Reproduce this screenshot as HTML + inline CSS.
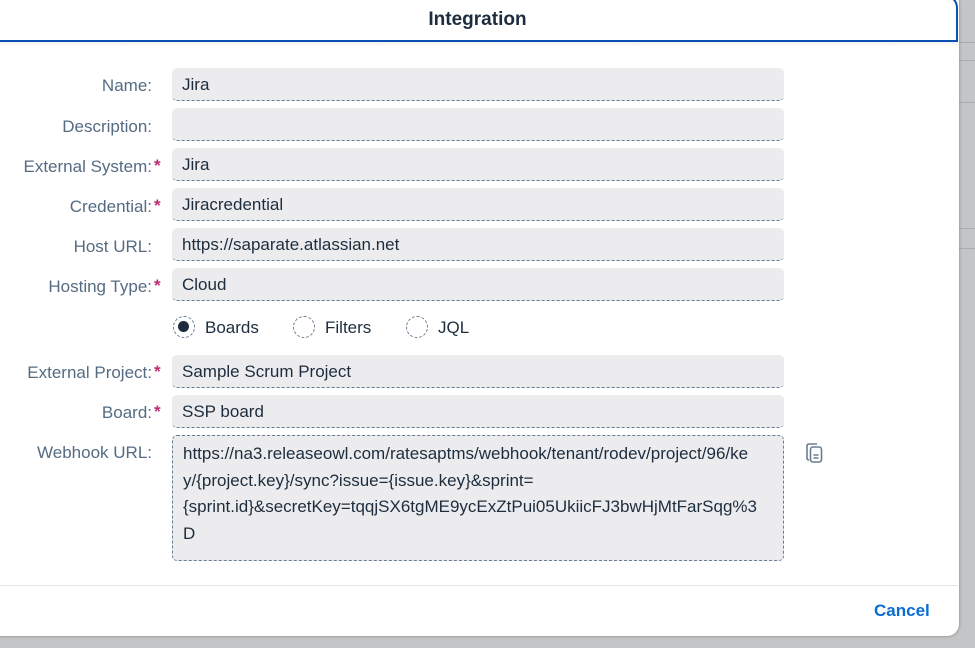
<!DOCTYPE html>
<html><head><meta charset="utf-8"><style>
*{box-sizing:border-box;margin:0;padding:0}
body{width:975px;height:648px;background:#c4c5c7;position:relative;overflow:hidden;font-family:"Liberation Sans",Arial,sans-serif}
.bgl{position:absolute;left:958px;width:17px;height:1px;background:#a9abae}
.dlg{position:absolute;left:-10px;top:-10px;width:969px;height:646px;background:#fff;border-radius:12px;box-shadow:0 0 3px rgba(0,0,0,.35)}
.hdr{position:absolute;left:-6px;top:-6px;width:964px;height:48px;border:2px solid #0a4fb3;border-top-right-radius:14px;background:#fff}
.title{position:absolute;left:0;width:955px;top:9px;text-align:center;font-weight:bold;font-size:19px;color:#1d2d3e}
.lbl{position:absolute;right:823px;font-size:17px;color:#556b82;white-space:nowrap}
.req{position:absolute;left:154px;font-size:17px;color:#c0296f;font-weight:bold}
.inp{position:absolute;left:172px;width:612px;height:33px;background:#ececee;border-radius:5px;border-bottom:1px dashed #6a7d92;font-size:17px;color:#1d2d3e;padding:7px 10px}
.ta{position:absolute;left:172px;top:435px;width:612px;height:126px;background:#ececee;border-radius:5px;border:1px dashed #6a7d92;font-size:17px;color:#1d2d3e;padding:5px 10px;line-height:26.5px;white-space:nowrap}
.rad{position:absolute;top:316px;width:22px;height:22px;border:1.5px dashed #6a7d92;border-radius:50%}
.rl{position:absolute;top:318px;font-size:17px;color:#1d2d3e}
</style></head><body>
<div class="bgl" style="top:42px"></div><div class="bgl" style="top:60px"></div><div class="bgl" style="top:102px"></div><div class="bgl" style="top:228px"></div><div class="bgl" style="top:248px"></div>
<div class="dlg"></div>
<div class="hdr"></div>
<div class="title">Integration</div>
<div style="position:absolute;left:0;top:42px;width:958px;height:4px;background:linear-gradient(#eef0f2,#fff)"></div>

<div class="lbl" style="top:76px">Name:</div>
<div class="inp" style="top:68px">Jira</div>
<div class="lbl" style="top:117px">Description:</div>
<div class="inp" style="top:108px"></div>
<div class="lbl" style="top:157px">External System:</div><div class="req" style="top:156px">*</div>
<div class="inp" style="top:148px">Jira</div>
<div class="lbl" style="top:197px">Credential:</div><div class="req" style="top:196px">*</div>
<div class="inp" style="top:188px">Jiracredential</div>
<div class="lbl" style="top:237px">Host URL:</div>
<div class="inp" style="top:228px">https://saparate.atlassian.net</div>
<div class="lbl" style="top:277px">Hosting Type:</div><div class="req" style="top:276px">*</div>
<div class="inp" style="top:268px">Cloud</div>

<div class="rad" style="left:173px"><div style="position:absolute;left:4px;top:4px;width:11px;height:11px;border-radius:50%;background:#1d2d3e"></div></div>
<div class="rl" style="left:205px">Boards</div>
<div class="rad" style="left:293px"></div><div class="rl" style="left:325px">Filters</div>
<div class="rad" style="left:406px"></div><div class="rl" style="left:438px">JQL</div>

<div class="lbl" style="top:363px">External Project:</div><div class="req" style="top:362px">*</div>
<div class="inp" style="top:355px">Sample Scrum Project</div>
<div class="lbl" style="top:403px">Board:</div><div class="req" style="top:402px">*</div>
<div class="inp" style="top:395px">SSP board</div>
<div class="lbl" style="top:443px">Webhook URL:</div>
<div class="ta">https://na3.releaseowl.com/ratesaptms/webhook/tenant/rodev/project/96/ke<br>y/{project.key}/sync?issue={issue.key}&amp;sprint=<br>{sprint.id}&amp;secretKey=tqqjSX6tgME9ycExZtPui05UkiicFJ3bwHjMtFarSqg%3<br>D</div>
<svg style="position:absolute;left:805px;top:442px" width="20" height="22" viewBox="0 0 20 22" fill="none" stroke="#6a7d92" stroke-width="1.6"><path d="M4 18 Q2 18 2 16 V4 Q2 2 4 2 H12"/><rect x="5.5" y="5" width="11" height="15" rx="2.5"/><path d="M8.5 13h5M8.5 16h5"/></svg>

<div style="position:absolute;left:0;top:585px;width:958px;height:1px;background:#e2e4e6"></div>
<div style="position:absolute;left:874px;top:601px;font-size:17px;font-weight:bold;color:#0a6ed1">Cancel</div>
</body></html>
